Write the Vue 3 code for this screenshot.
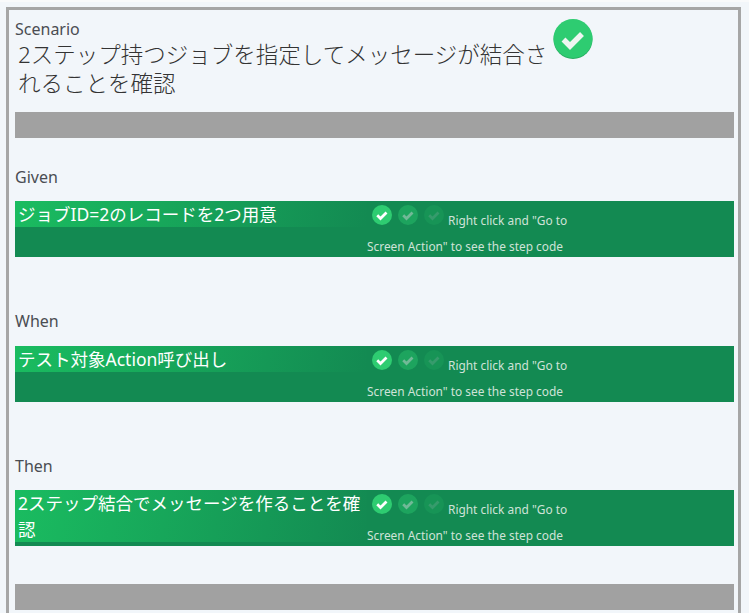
<script setup>
const steps = [
  { label: 'Given', title: 'ジョブID=2のレコードを2つ用意' },
  { label: 'When', title: 'テスト対象Action呼び出し' },
  { label: 'Then', title: '2ステップ結合でメッセージを作ることを確認' }
]
const fades = ['full', 'half', 'faint']
</script>

<template>
  <div class="page">
    <div class="scenario">
      <div class="label">Scenario</div>
      <div class="head">
        <h1 class="title">2ステップ持つジョブを指定してメッセージが結合されることを確認</h1>
        <svg class="check big" viewBox="0 0 40 40">
          <circle cx="20" cy="20.5" r="19.5" fill="#27ae60" />
          <circle cx="20" cy="19.5" r="19.5" fill="#2ecc71" />
          <path d="M10.5 20.5l6.5 6.5L29 15" fill="none" stroke="#eef6f1" stroke-width="5.5" />
        </svg>
      </div>
      <div class="bar first"></div>
      <section v-for="step in steps" :key="step.label" class="step">
        <div class="label">{{ step.label }}</div>
        <div class="row">
          <div class="row-title">{{ step.title }}</div>
          <div class="row-info">
            <svg v-for="fade in fades" :key="fade" class="check" :class="fade" viewBox="0 0 40 40">
              <circle cx="20" cy="20" r="20" fill="#2ecc71" />
              <path d="M10.5 20.5l6.5 6.5L29 15" fill="none" stroke="#fff" stroke-width="5.5" />
            </svg>
            <span class="hint">Right click and "Go to Screen Action" to see the step code</span>
          </div>
        </div>
      </section>
      <div class="bar last"></div>
    </div>
  </div>
</template>

<style>
html, body {
  margin: 0;
  height: 100%;
  overflow: hidden;
  background: #f2f6fa;
}
</style>

<style scoped>
.page {
  padding: 5px 8px 0 6px;
  border-top: 2px solid #f9fafb;
  font-family: "Noto Sans", "Noto Sans CJK JP", sans-serif;
}

.scenario {
  border: 3px solid #a6a6a6;
  padding: 9px 4px 20px 6px;
  height: 640px;
}

.label {
  font-size: 16px;
  line-height: 20px;
  color: #4a4d52;
}

.head {
  display: flex;
  align-items: flex-start;
}

.title {
  width: 532px;
  margin: 2px 0 0 3px;
  font-size: 22.5px;
  font-weight: 300;
  line-height: 28.5px;
  color: #333;
}

.check {
  display: inline-block;
  width: 20px;
  height: 20px;
  margin: 0 6px 0 0;
  vertical-align: 0;
}

.check:first-child {
  margin-left: 5px;
}

.check.faint {
  margin-right: 4px;
}

.check.big {
  width: 40px;
  height: 40px;
  margin: -20px 0 0 3px;
}

.half { opacity: 0.4; }
.faint { opacity: 0.15; }

.bar {
  height: 26px;
  background: #a1a1a1;
}

.first {
  margin-top: 14px;
}

.last {
  margin-top: 38px;
}

.step {
  margin-top: 28.5px;
}

.step + .step {
  margin-top: 54px;
}

.step .label {
  margin-bottom: 14.5px;
}

.row {
  display: flex;
  height: 56px;
  background: #138a52;
}

.row-title {
  flex: 0 0 349px;
  align-self: flex-start;
  padding-left: 3px;
  font-size: 17.5px;
  line-height: 26px;
  color: #fff;
  background: linear-gradient(100deg, #1abc60 0%, #138a52 100%);
}

.row-info {
  width: 206px;
  padding-top: 4px;
  font-size: 11.9px;
  line-height: 26px;
  color: #cfe3d8;
  box-sizing: border-box;
  height: 56px;
  overflow: hidden;
}
</style>
